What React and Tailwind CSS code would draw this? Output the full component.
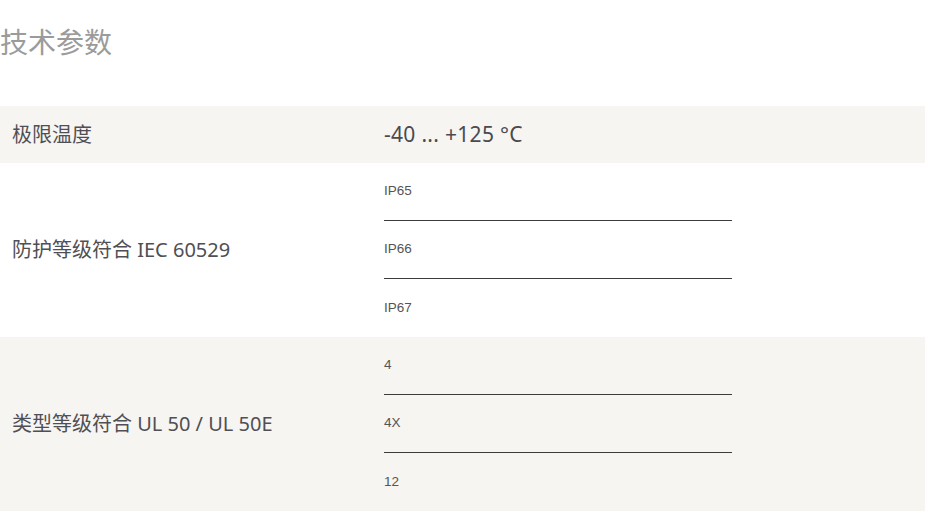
import React from "react";

const rows = [
  { label: "极限温度", value: "-40 ... +125 °C" },
  { label: "防护等级符合 IEC 60529", items: ["IP65", "IP66", "IP67"] },
  { label: "类型等级符合 UL 50 / UL 50E", items: ["4", "4X", "12"] },
];

const cjk = { fontFamily: '"Noto Sans", "Noto Sans CJK SC", sans-serif' };

const App = () => {
  return (
    <div className="w-[925px] h-[512px] bg-white overflow-hidden" style={cjk}>
      <h2 className="text-[28px] leading-[40px] text-[#9b9b9b] pt-[22px]">技术参数</h2>

      <div className="mt-[44px]">
        {rows.map((row, i) => (
          <div
            key={row.label}
            className={`flex items-center ${i % 2 === 0 ? "bg-[#f6f5f2]" : "bg-white"}`}
          >
            <div className="w-[384px] pl-[12px] text-[20px] text-[#4f4f55]">{row.label}</div>
            {row.value ? (
              <div className="h-[57px] flex items-center text-[21px] tracking-[0.3px] text-[#4a4a4f]">{row.value}</div>
            ) : (
              <div className="w-[348px]">
                {row.items.map((item, j) => (
                  <div
                    key={item}
                    className={`h-[58px] flex items-center text-[13.5px] text-[#555] font-['Liberation_Sans',sans-serif] ${
                      j < row.items.length - 1 ? "border-b border-[#3c3c3c]" : ""
                    }`}
                  >
                    {item}
                  </div>
                ))}
              </div>
            )}
          </div>
        ))}
      </div>
    </div>
  );
};

export default App;
